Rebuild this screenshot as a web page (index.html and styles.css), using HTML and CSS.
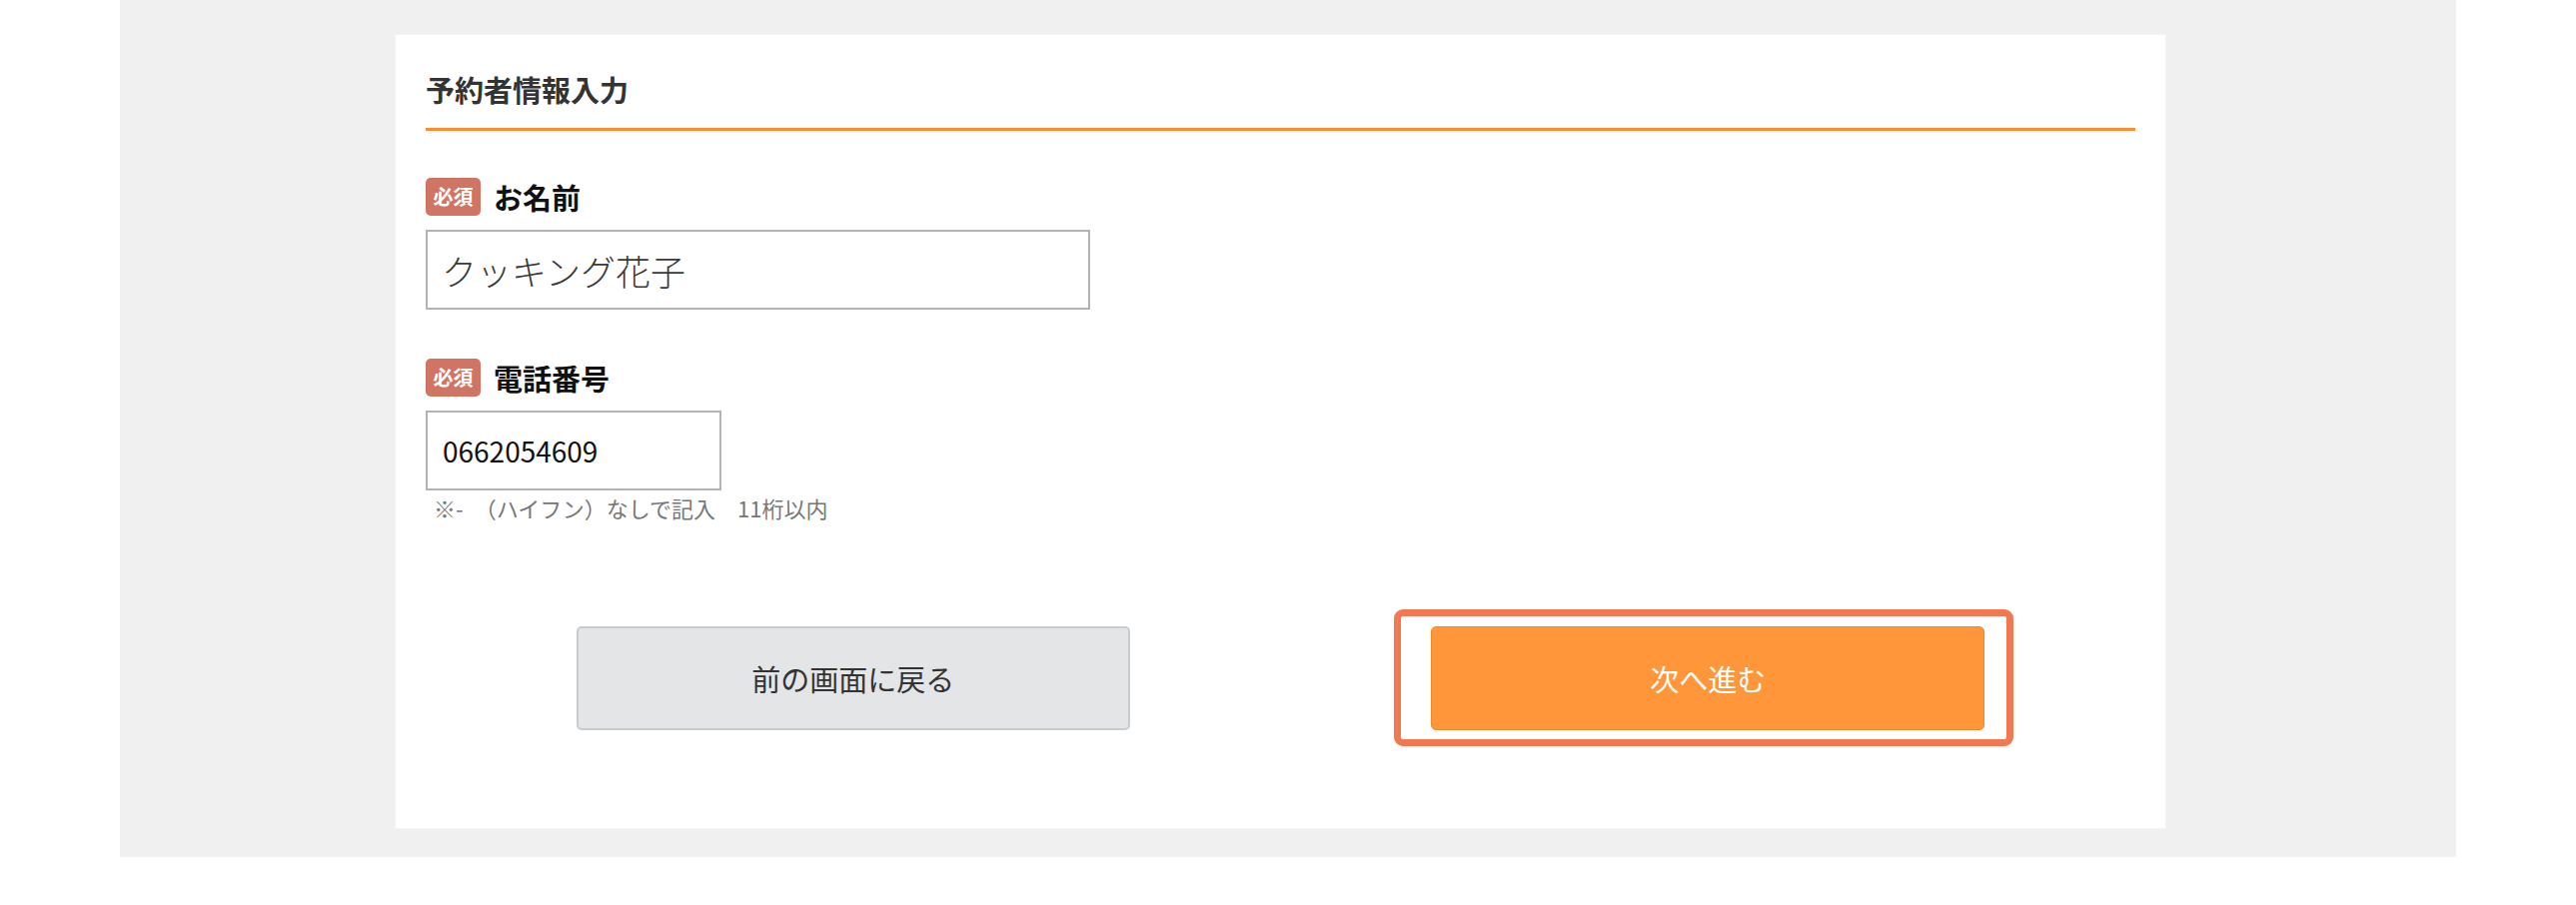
FILE: index.html
```html
<!DOCTYPE html>
<html lang="ja">
<head>
<meta charset="utf-8">
<title>予約者情報入力</title>
<link rel="stylesheet" href="styles.css">
</head>
<body>
<div class="page">
  <section class="card">
    <h2 class="card-title">予約者情報入力</h2>

    <div class="field field-name">
      <div class="field-label">
        <span class="badge">必須</span>
        <span class="label-text">お名前</span>
      </div>
      <input class="input input-name" type="text" value="クッキング花子">
    </div>

    <div class="field field-tel">
      <div class="field-label">
        <span class="badge">必須</span>
        <span class="label-text">電話番号</span>
      </div>
      <input class="input input-tel" type="text" value="0662054609">
      <p class="note">※-&ensp;（ハイフン）なしで記入　11桁以内</p>
    </div>

    <div class="actions">
      <div class="action-cell">
        <button class="btn btn-back" type="button">前の画面に戻る</button>
      </div>
      <div class="action-cell">
        <div class="highlight">
          <button class="btn btn-next" type="button">次へ進む</button>
        </div>
      </div>
    </div>
  </section>
</div>
</body>
</html>
```
FILE: styles.css
```css
html, body {
  margin: 0;
  padding: 0;
  background: #ffffff;
}

body {
  font-family: "Noto Sans CJK JP", "Noto Sans", sans-serif;
  color: #333333;
}

.page {
  margin: 0 120px;
  background: #f0f0f0;
  padding: 34px 0 28px 275px;
}

.card {
  box-sizing: border-box;
  width: 1773px;
  height: 796px;
  background: #ffffff;
  border: 1px solid #f4f4f4;
  padding: 34px 30px 0 30px;
}

.card-title {
  margin: 0;
  font-size: 29px;
  font-weight: 700;
  line-height: 40px;
  color: #333333;
  padding-bottom: 19px;
  border-bottom: 3px solid #ff8d2f;
}

.field-name {
  margin-top: 47px;
}

.field-tel {
  margin-top: 49px;
}

.field-label {
  display: flex;
  align-items: center;
  gap: 13px;
  height: 38px;
}

.badge {
  display: flex;
  align-items: center;
  justify-content: center;
  width: 55px;
  height: 38px;
  border-radius: 5px;
  background: #d07464;
  color: #ffffff;
  font-size: 20px;
  font-weight: 700;
  line-height: 1;
}

.label-text {
  font-size: 29px;
  font-weight: 700;
  color: #111111;
  line-height: 38px;
}

.input {
  display: block;
  box-sizing: border-box;
  margin: 14px 0 0 0;
  height: 80px;
  border: 2px solid #b3b3b3;
  border-radius: 0;
  background: #ffffff;
  font-family: "Noto Sans CJK JP", "Noto Sans", sans-serif;
  outline: none;
}

.input-name {
  width: 665px;
  padding: 0 14px;
  font-size: 35px;
  font-weight: 300;
  color: #3a3a3a;
}

.input-tel {
  width: 296px;
  padding: 0 15px;
  font-size: 28px;
  color: #111111;
}

.note {
  margin: 3px 0 0 8px;
  font-size: 22px;
  line-height: 28px;
  color: #777777;
}

.actions {
  display: grid;
  grid-template-columns: 1fr 1fr;
  margin-top: 105px;
}

.action-cell {
  display: flex;
  justify-content: center;
}

.highlight {
  position: relative;
}

.highlight::after {
  content: "";
  position: absolute;
  top: -17px;
  bottom: -16px;
  left: -37px;
  right: -29px;
  border: 7px solid #f27852;
  border-radius: 9px;
  pointer-events: none;
}

.btn {
  display: flex;
  align-items: center;
  justify-content: center;
  box-sizing: border-box;
  width: 554px;
  height: 104px;
  border-radius: 5px;
  font-family: "Noto Sans CJK JP", "Noto Sans", sans-serif;
  font-size: 29px;
  font-weight: 400;
  cursor: pointer;
  padding: 0;
}

.btn-back {
  background: #e4e5e7;
  border: 2px solid #c9cbce;
  color: #333333;
}

.btn-next {
  background: #ff963a;
  border: 1px solid #f0892d;
  color: #ffffff;
}
```
